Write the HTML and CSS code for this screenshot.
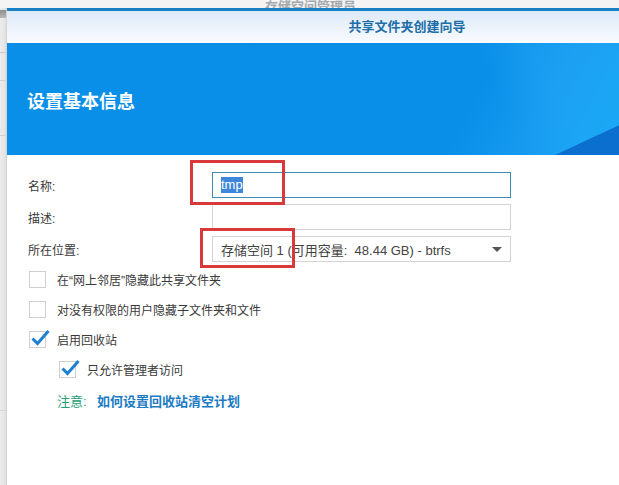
FILE: index.html
```html
<!DOCTYPE html>
<html lang="zh-CN">
<head>
<meta charset="utf-8">
<title>共享文件夹创建向导</title>
<link rel="stylesheet" href="styles.css">
</head>
<body>
<div class="screen">
  <div class="topbar"><span class="bg-title">存储空间管理员</span></div>
  <div class="row">
    <div class="side"></div>
    <div class="dialog">
      <div class="dlg-head">共享文件夹创建向导</div>
      <div class="banner"><h1 class="banner-title">设置基本信息</h1></div>
      <div class="form">
        <div class="fields">
          <label class="lbl">名称:</label>
          <div class="input focus"><span class="sel">tmp</span></div>
          <label class="lbl">描述:</label>
          <div class="input"></div>
          <label class="lbl">所在位置:</label>
          <div class="input select"><span>存储空间 1 (可用容量:&nbsp;&nbsp;48.44 GB) - btrfs</span><span class="arrow"></span></div>
        </div>
        <div class="checks">
          <div class="check"><span class="box"></span><span class="ctext">在“网上邻居”隐藏此共享文件夹</span></div>
          <div class="check"><span class="box"></span><span class="ctext">对没有权限的用户隐藏子文件夹和文件</span></div>
          <div class="check"><span class="box checked"><svg viewBox="0 0 20 18" width="20" height="18"><path d="M2.5 9.5 L7.5 14.5 L18.5 2" fill="none" stroke="#1e80d2" stroke-width="3"/></svg></span><span class="ctext">启用回收站</span></div>
          <div class="check sub"><span class="box checked"><svg viewBox="0 0 20 18" width="20" height="18"><path d="M2.5 9.5 L7.5 14.5 L18.5 2" fill="none" stroke="#1e80d2" stroke-width="3"/></svg></span><span class="ctext">只允许管理者访问</span></div>
          <div class="note"><span class="note-label">注意:</span><a class="note-link">如何设置回收站清空计划</a></div>
        </div>
      </div>
      <div class="mark mark-1"></div>
      <div class="mark mark-2"></div>
    </div>
  </div>
</div>
</body>
</html>
```

FILE: styles.css
```css
html, body {
  margin: 0;
  padding: 0;
  width: 619px;
  height: 485px;
  overflow: hidden;
  background: #eaeaea;
  font-family: "Liberation Sans", "Noto Sans CJK SC", sans-serif;
  font-size: 12px;
  color: #333;
}

.screen {
  width: 619px;
  height: 485px;
  overflow: hidden;
  display: flex;
  flex-direction: column;
}

.topbar {
  height: 8px;
  flex-shrink: 0;
  background: #f4f4f4;
  overflow: hidden;
  text-align: center;
  padding-left: 0;
}

.bg-title {
  display: inline-block;
  margin-top: -7px;
  margin-left: 2px;
  line-height: 16px;
  font-size: 13px;
  color: #a4a9ad;
  font-weight: bold;
}

.row {
  display: flex;
  flex: 1;
}

.side {
  width: 7px;
  flex-shrink: 0;
  background:
    linear-gradient(#c9c9c9, #c9c9c9) 0 44px / 7px 1px no-repeat,
    linear-gradient(#d2d2d2, #d2d2d2) 0 72px / 7px 1px no-repeat,
    linear-gradient(#d2d2d2, #d2d2d2) 0 127px / 7px 1px no-repeat,
    linear-gradient(#d6d6d6, #d6d6d6) 0 402px / 7px 1px no-repeat,
    linear-gradient(#8e8e8e, #b8b8b8) 0 2px / 6px 8px no-repeat,
    linear-gradient(90deg, #ececec 0, #e4e4e4 5px, #cfcfcf 7px);
}

.dialog {
  position: relative;
  width: 800px;
  flex-shrink: 0;
  background: #fff;
  border-top: 3px solid #1a80c6;
}

.dlg-head {
  height: 32px;
  line-height: 32px;
  text-align: center;
  font-size: 13px;
  font-weight: bold;
  color: #1d6ea8;
  background: linear-gradient(#dceaf8, #f9fbfe);
}

.banner {
  height: 112px;
  display: flex;
  align-items: center;
  padding-left: 20px;
  background:
    linear-gradient(155deg, rgba(0,0,0,0) 92.4%, #0b6fd0 92.6%) 0 0 / 612px 112px no-repeat,
    linear-gradient(118deg, rgba(0,0,0,0) 74%, rgba(40,175,250,0.45) 88%, rgba(30,180,250,0.6) 100%) 0 0 / 612px 112px no-repeat,
    linear-gradient(62deg, rgba(0,0,0,0) 78%, rgba(60,190,255,0.18) 86%) 0 0 / 612px 112px no-repeat,
    #0a8fe9;
}

.banner-title {
  margin: 0;
  margin-top: 2px;
  font-size: 18px;
  font-weight: bold;
  color: #fff;
  letter-spacing: 0;
}

.form {
  padding: 17px 0 0 21px;
}

.fields {
  display: grid;
  grid-template-columns: 184px 299px;
  grid-auto-rows: 26px;
  row-gap: 6px;
}

.lbl {
  display: flex;
  align-items: center;
  padding-top: 0;
  color: #3a3a3a;
}

.input {
  box-sizing: border-box;
  border: 1px solid #d3d3d3;
  background: #fff;
  display: flex;
  align-items: center;
  padding-left: 8px;
  font-size: 13px;
  color: #444;
}

.input.focus {
  border-color: #3b8cb4;
}

.sel {
  background: #3e86d9;
  color: #fff;
  line-height: 15px;
  padding: 0 0 1px 0;
}

.select {
  justify-content: space-between;
  padding-right: 8px;
}

.arrow {
  width: 0;
  height: 0;
  border-left: 5px solid transparent;
  border-right: 5px solid transparent;
  border-top: 5px solid #555;
}

.checks {
  margin-top: 2px;
  padding-left: 1px;
}

.check {
  height: 30px;
  display: flex;
  align-items: center;
}

.check.sub {
  padding-left: 30px;
}

.box {
  position: relative;
  box-sizing: border-box;
  width: 17px;
  height: 17px;
  border: 1px solid #cfcfcf;
  background: #fff;
  margin-right: 11px;
  flex-shrink: 0;
}

.box svg {
  position: absolute;
  left: 0;
  top: -3px;
}

.ctext {
  color: #3a3a3a;
}

.note {
  height: 32px;
  display: flex;
  align-items: center;
  padding-left: 28px;
  font-size: 13px;
}

.note-label {
  color: #1f9d78;
  width: 40px;
}

.note-link {
  color: #1a7bc4;
  font-weight: bold;
}

.mark {
  position: absolute;
  border: 3px solid #d83a3c;
  box-sizing: border-box;
}

.mark-1 {
  left: 183px;
  top: 149px;
  width: 95px;
  height: 45px;
}

.mark-2 {
  left: 193px;
  top: 217px;
  width: 95px;
  height: 40px;
}
```
